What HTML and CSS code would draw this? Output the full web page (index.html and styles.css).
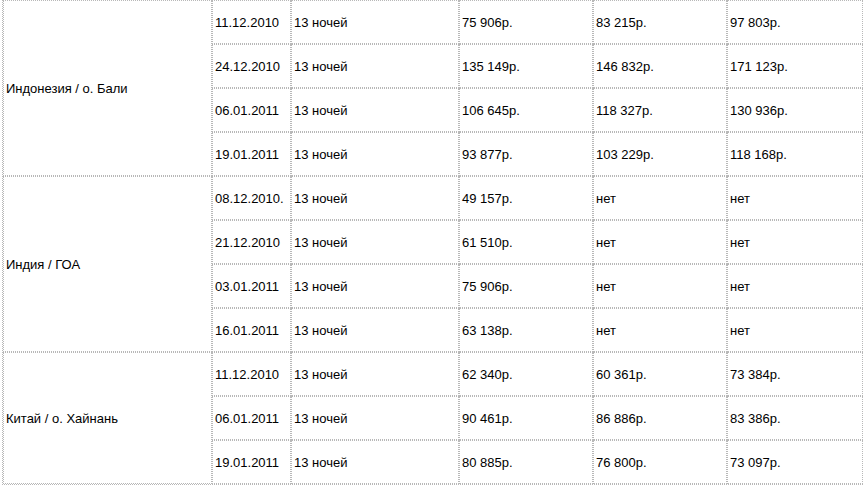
FILE: index.html
```html
<!DOCTYPE html>
<html lang="ru">
<head>
<meta charset="utf-8">
<title>Туры</title>
<link rel="stylesheet" href="styles.css">
</head>
<body>
<div class="wrap">
<table class="tours">
<colgroup>
<col class="c-region"><col class="c-date"><col class="c-nights"><col class="c-p1"><col class="c-p2"><col class="c-p3">
</colgroup>
<tbody>
<tr><td rowspan="4">Индонезия / о. Бали</td><td>11.12.2010</td><td>13 ночей</td><td>75 906р.</td><td>83 215р.</td><td>97 803р.</td></tr>
<tr><td>24.12.2010</td><td>13 ночей</td><td>135 149р.</td><td>146 832р.</td><td>171 123р.</td></tr>
<tr><td>06.01.2011</td><td>13 ночей</td><td>106 645р.</td><td>118 327р.</td><td>130 936р.</td></tr>
<tr><td>19.01.2011</td><td>13 ночей</td><td>93 877р.</td><td>103 229р.</td><td>118 168р.</td></tr>
<tr><td rowspan="4">Индия / ГОА</td><td>08.12.2010.</td><td>13 ночей</td><td>49 157р.</td><td>нет</td><td>нет</td></tr>
<tr><td>21.12.2010</td><td>13 ночей</td><td>61 510р.</td><td>нет</td><td>нет</td></tr>
<tr><td>03.01.2011</td><td>13 ночей</td><td>75 906р.</td><td>нет</td><td>нет</td></tr>
<tr><td>16.01.2011</td><td>13 ночей</td><td>63 138р.</td><td>нет</td><td>нет</td></tr>
<tr><td rowspan="3">Китай / о. Хайнань</td><td>11.12.2010</td><td>13 ночей</td><td>62 340р.</td><td>60 361р.</td><td>73 384р.</td></tr>
<tr><td>06.01.2011</td><td>13 ночей</td><td>90 461р.</td><td>86 886р.</td><td>83 386р.</td></tr>
<tr><td>19.01.2011</td><td>13 ночей</td><td>80 885р.</td><td>76 800р.</td><td>73 097р.</td></tr>
</tbody>
</table>
</div>
</body>
</html>
```
FILE: styles.css
```css
html, body {
  margin: 0;
  padding: 0;
  background: #fff;
}
.wrap {
  padding: 0 2px;
}
.tours {
  table-layout: fixed;
  width: 861px;
  border-collapse: separate;
  border-spacing: 0;
  border-left: 1px dotted #b8b8b8;
  border-bottom: 1px dotted #b8b8b8;
  font-family: "Liberation Sans", Arial, sans-serif;
  font-size: 13px;
  color: #000;
}
.c-region { width: 209px; }
.c-date { width: 79px; }
.c-nights { width: 168px; }
.c-p1 { width: 134px; }
.c-p2 { width: 134px; }
.c-p3 { width: 136px; }
.tours td {
  border: 1px dotted #b8b8b8;
  height: 44px;
  padding: 0 2px;
  vertical-align: middle;
  text-align: left;
  box-sizing: border-box;
  white-space: nowrap;
}
.tours tr {
  height: 44px;
}
```
